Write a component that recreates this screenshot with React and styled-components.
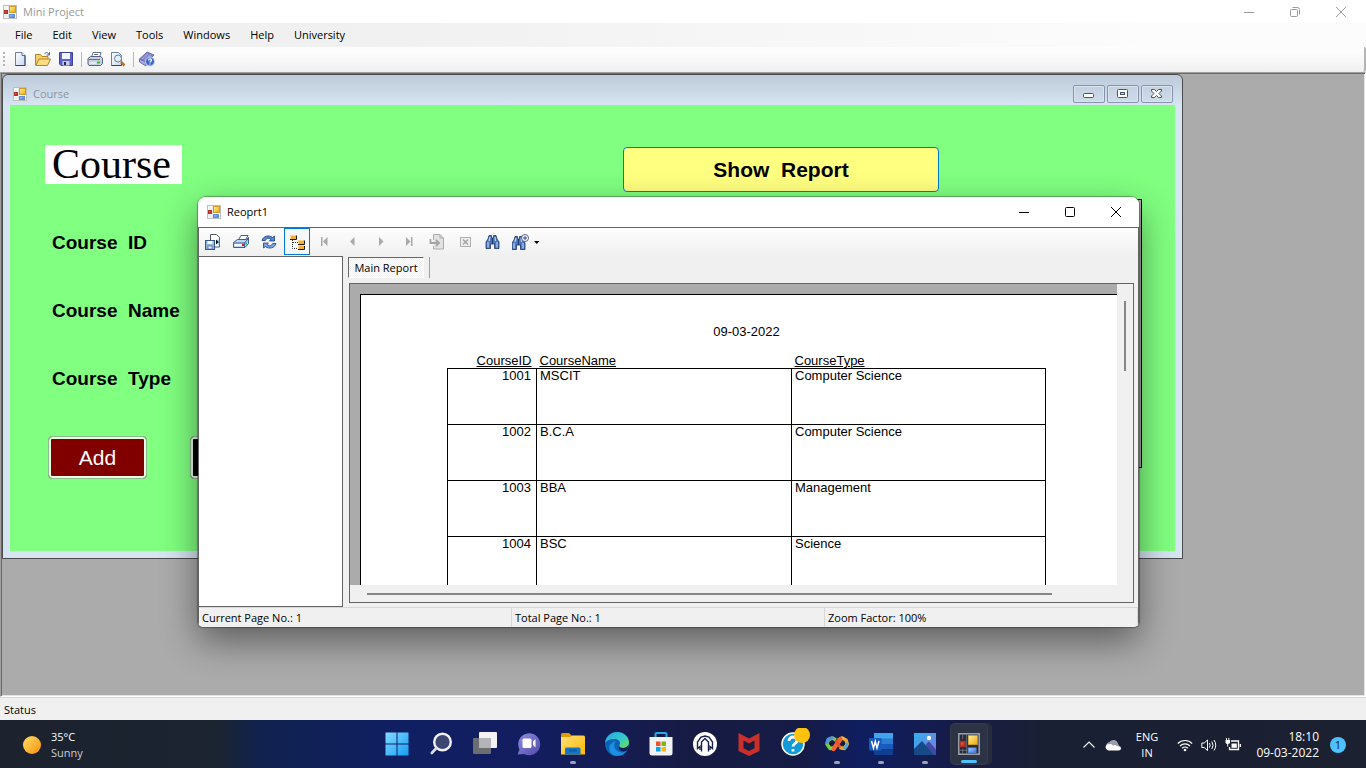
import React from "react";
import styled, { createGlobalStyle, css } from "styled-components";

const uiFont = '"Open Sans", "Noto Sans", sans-serif';
const reportFont = '"Liberation Sans", Arial, sans-serif';

const GlobalStyle = createGlobalStyle`
  * { box-sizing: border-box; }
  body { margin: 0; font-family: ${uiFont}; font-size: 11px; color: #000; }
  button, input { font: inherit; color: inherit; }
`;

const Desktop = styled.div`
  display: flex;
  flex-direction: column;
  min-height: 100vh;
  overflow: hidden;
`;

const MainWindow = styled.main`
  display: flex;
  flex-direction: column;
  flex: 1;
  overflow: hidden;
  background: #f0f0f0;
`;

const TitleBar = styled.header`
  display: flex;
  align-items: center;
  height: ${(p) => (p.$child ? "30px" : "23px")};
  padding: ${(p) => (p.$child ? "0 0 1px 9px" : "0 2px 0 3px")};
  background: #fff;
  color: ${(p) => (p.$inactive ? "#999" : "#000")};
`;

const TitleText = styled.h1`
  flex: 1;
  margin: 0 0 0 6px;
  font-size: 11px;
  font-weight: 400;
  line-height: 16px;
`;

const CaptionButton = styled.button`
  display: flex;
  align-items: center;
  justify-content: center;
  width: 46px;
  height: 22px;
  padding: 0;
  border: 0;
  background: none;
`;

const MenuBar = styled.nav`
  display: flex;
  align-items: center;
  gap: 20px;
  height: 24px;
  padding-left: 15px;
  background: linear-gradient(90deg, #f0f0f0 25%, #fcfcfc 85%);
`;

const MenuItem = styled.button`
  padding: 0;
  border: 0;
  background: none;
  line-height: 16px;
`;

const ToolBar = styled.div`
  display: flex;
  align-items: center;
  gap: 7px;
  height: 25px;
  padding: 0 0 1px 3px;
  border-right: 2px solid #b4b4b4;
  border-radius: 0 2px 3px 0;
  background: linear-gradient(#fdfdfd 20%, #f0f0f0);
`;

const Grip = styled.span`
  width: 2px;
  height: 14px;
  background: repeating-linear-gradient(#b4b4b4 0 2px, transparent 2px 4px);
`;

const Separator = styled.span`
  width: 1px;
  height: 15px;
  margin-right: -2px;
  background: #b8b8b8;
`;

const ToolButton = styled.button`
  display: flex;
  padding: 0;
  border: 0;
  background: none;
`;

const MdiArea = styled.div`
  position: relative;
  flex: 1;
  border: 1px solid;
  border-color: #a0a0a0 #fff #fff #a0a0a0;
  box-shadow: inset 1px 1px 0 #696969, inset -1px -1px 0 #e3e3e3;
  background: #ababab;
`;

const StatusStrip = styled.footer`
  height: 23px;
  padding: 4px;
  border-top: 1px solid #d7d7d7;
  line-height: 16px;
`;

/* ---------- Course window ---------- */

const CourseWindow = styled.section`
  position: absolute;
  left: 1px;
  top: 1px;
  width: 1181px;
  height: 485px;
  display: flex;
  flex-direction: column;
  padding: 0 7px 7px;
  border: 1px solid #4b4b4b;
  border-radius: 6px 6px 0 0;
  background: linear-gradient(#bccad9, #d7e4f2 30px);
`;

const CourseTitleBar = styled.header`
  display: flex;
  align-items: center;
  height: 30px;
  padding: 7px 2px 0 3px;
  color: #8c949e;
`;

const FrameButton = styled.button`
  display: flex;
  align-items: center;
  justify-content: center;
  width: 32px;
  height: 18px;
  margin-left: 2px;
  padding: 0;
  border: 1px solid #8793ad;
  border-radius: 2px;
  background: linear-gradient(#c3d0e0, #cfdcea);
  box-shadow: inset 0 0 0 1px #dbe5f0;
`;

const CourseBody = styled.div`
  display: flex;
  flex: 1;
  padding: 40px 33px 0 35px;
  background: #80ff80;
  font-family: ${reportFont};
`;

const FormColumn = styled.div`
  width: 578px;
`;

const GridColumn = styled.div`
  display: flex;
  flex: 1;
  flex-direction: column;
  align-items: flex-start;
  gap: 7px;
  padding-top: 2px;
`;

const CourseHeading = styled.h2`
  width: 137px;
  height: 39px;
  margin: 0 0 47px;
  padding-left: 7px;
  background: #fff;
  font: 400 42px/38px "Liberation Serif", "Times New Roman", serif;
`;

const Fields = styled.div`
  display: grid;
  grid-template-columns: 200px 220px;
  row-gap: 44px;
  padding-left: 7px;
`;

const FieldLabel = styled.label`
  font-size: 19px;
  font-weight: 700;
  line-height: 24px;
  white-space: pre;
`;

const FieldInput = styled.input`
  height: 24px;
  border: 1px solid #7a7a7a;
`;

const ButtonRow = styled.div`
  display: flex;
  gap: 43px;
  margin: 45px 0 0 3px;
`;

const FormButton = styled.button`
  width: 99px;
  height: 43px;
  padding: 0;
  border: 1px solid #8fb98f;
  border-radius: 4px;
  background: ${(p) => (p.$dark ? "#000" : "#800000")};
  box-shadow: inset 0 0 0 2px #e4fbe4;
  color: #fff;
  font-size: 21px;
`;

const ShowReportButton = styled.button`
  width: 316px;
  height: 45px;
  padding: 0;
  border: 1px solid #0078d7;
  border-radius: 4px;
  background: #ffff80;
  font-size: 21px;
  font-weight: 700;
  white-space: pre;
`;

const DataGrid = styled.div`
  align-self: stretch;
  height: 269px;
  border: 1px solid #000;
  background: #ababab;
`;

/* ---------- Report window ---------- */

const ReportWindow = styled.section`
  position: absolute;
  left: 197px;
  top: 124px;
  width: 941px;
  height: 430px;
  display: flex;
  flex-direction: column;
  overflow: hidden;
  border-radius: 8px 8px 5px 5px;
  background: #f0f0f0;
`;

const ReportShadow = styled.div`
  position: absolute;
  left: 197px;
  top: 124px;
  width: 941px;
  height: 430px;
  border-radius: 8px 8px 5px 5px;
  box-shadow: 0 0 1px 1px rgba(0, 0, 0, 0.3), 0 14px 36px rgba(0, 0, 0, 0.46);
`;

const ReportClient = styled.div`
  display: flex;
  flex-direction: column;
  flex: 1;
  min-height: 0;
  border: solid #646464;
  border-width: 1px 1px 0;
`;

const ReportTools = styled.div`
  display: flex;
  height: 28px;
  background: linear-gradient(#fdfdfd, #f0f0f0);
`;

const ReportTool = styled.button`
  display: flex;
  align-items: center;
  justify-content: center;
  width: ${(p) => (p.$wide ? "38px" : "28px")};
  height: 27px;
  padding: 0;
  border: 0;
  background: none;
  ${(p) =>
    p.$active &&
    css`
      width: 26px;
      margin: 0 1px;
      border: 1px solid #0078d7;
      background: #f6f9fc;
    `}
`;

const ReportBody = styled.div`
  display: flex;
  flex: 1;
  min-height: 0;
`;

const GroupTree = styled.aside`
  width: 144px;
  border: solid #646464;
  border-width: 1px 1px 1px 0;
  background: #fff;
`;

const ViewerColumn = styled.div`
  display: flex;
  flex: 1;
  min-width: 0;
  flex-direction: column;
  gap: 5px;
  padding: 1px 4px 4px 5px;
`;

const TabStrip = styled.div`
  display: flex;
  gap: 5px;
  height: 21px;
`;

const Tab = styled.button`
  width: 76px;
  padding: 0;
  border: 1px solid;
  border-color: #696969 #fff #fff #696969;
  background: repeating-conic-gradient(#f0f0f0 0 25%, #fff 0 50%) 0 0 / 2px 2px;
  line-height: 18px;
  white-space: nowrap;
`;

const TabDivider = styled.span`
  width: 1px;
  background: #a0a0a0;
`;

const Viewer = styled.div`
  display: grid;
  flex: 1;
  min-height: 0;
  grid-template: minmax(0, 1fr) 17px / minmax(0, 1fr) 16px;
  margin-left: 1px;
  border: 1px solid #646464;
`;

const Canvas = styled.div`
  overflow: hidden;
  padding: 10px 0 0 10px;
  background: #ababab;
`;

const Paper = styled.article`
  min-height: 100%;
  padding: 29px 0 0 86px;
  border: solid #000;
  border-width: 1px 0 0 1px;
  background: #fff;
  font-family: ${reportFont};
  font-size: 13px;
`;

const ReportDate = styled.p`
  width: 599px;
  margin: 0 0 13px;
  line-height: 16px;
  text-align: center;
`;

const CourseTable = styled.table`
  width: 599px;
  table-layout: fixed;
  border-collapse: collapse;

  th {
    height: 15px;
    padding: 0 3px;
    font-weight: 400;
    line-height: 15px;
    text-align: left;
    text-decoration: underline;
  }

  td {
    height: 56px;
    padding: 0 3px;
    border: 1px solid #000;
    line-height: 14px;
    vertical-align: top;
  }

  th:first-child,
  td:first-child {
    padding-right: 5px;
    text-align: right;
  }
`;

const ScrollTrack = styled.div`
  display: flex;
  padding: ${(p) => (p.$vertical ? "17px 7px" : "8px 17px 7px")};
  grid-column: ${(p) => (p.$vertical ? "2" : "1 / 3")};
`;

const ScrollThumb = styled.span`
  width: ${(p) => (p.$vertical ? "2px" : "685px")};
  height: ${(p) => (p.$vertical ? "70px" : "2px")};
  background: #868686;
`;

const ReportStatus = styled.footer`
  display: grid;
  grid-template-columns: repeat(3, 1fr);
  height: 20px;
  border-top: 1px solid #d7d7d7;
  line-height: 19px;
`;

const StatusCell = styled.span`
  padding-left: 3px;
  border-right: 1px solid #d7d7d7;
`;

/* ---------- Taskbar ---------- */

const TaskBar = styled.footer`
  display: grid;
  grid-template-columns: 1fr auto 1fr;
  align-items: center;
  height: 48px;
  background: linear-gradient(
    90deg,
    #1c222e 0%,
    #1b2431 16%,
    #10224f 19%,
    #101f63 29%,
    #121d5e 40%,
    #171b43 51%,
    #161b46 59%,
    #0f1e60 63%,
    #161c48 70%,
    #1a2034 76%,
    #1b2130 100%
  );
  color: #fff;
  font-size: 12px;
`;

const Weather = styled.button`
  display: flex;
  align-items: center;
  gap: 10px;
  padding: 2px 0 0 23px;
  border: 0;
  background: none;
  font-size: 11px;
  line-height: 16px;
  text-align: left;
`;

const Muted = styled.span`
  color: #c8ccd2;
`;

const Lines = styled.span`
  display: flex;
  flex-direction: column;
`;

const Apps = styled.div`
  display: flex;
`;

const AppButton = styled.button`
  display: flex;
  flex-direction: column;
  align-items: center;
  width: 44px;
  height: 40px;
  padding: 8px 0 0;
  border: 0;
  background: none;
  ${(p) =>
    p.$active &&
    css`
      width: 36px;
      margin: 0 4px;
      padding-top: 9px;
      border-radius: 4px;
      background: #2c3345;
      box-shadow: 0 0 0 1px #363c4b, 4px 0 0 1px #272d3d;
    `}
`;

const RunMark = styled.span`
  flex: none;
  width: ${(p) => (p.$active ? "16px" : "6px")};
  height: 3px;
  margin-top: 5px;
  border-radius: 2px;
  background: ${(p) => (p.$active ? "#4cc2ff" : "#9aa1b2")};
`;

const Tray = styled.div`
  display: flex;
  align-items: center;
  justify-content: flex-end;
  gap: 8px;
  padding: 1px 20px 0 0;
  line-height: 16px;
`;

const Language = styled.span`
  width: 36px;
  margin-right: 4px;
  font-size: 11px;
  text-align: center;
`;

const Clock = styled.time`
  width: 70px;
  text-align: right;
`;

const Badge = styled.span`
  width: 16px;
  height: 16px;
  margin-left: 3px;
  border-radius: 50%;
  background: #4cc2ff;
  color: #10222e;
  font-size: 11px;
  line-height: 16px;
  text-align: center;
`;

/* ---------- Icons ---------- */

const Icon = ({ size = 16, box, children }) => (
  <svg width={size} height={size} viewBox={`0 0 ${box || size} ${box || size}`} fill="none" aria-hidden="true">
    {children}
  </svg>
);

const GradientDefs = styled.svg`
  position: absolute;
`;

const Gradients = () => (
  <GradientDefs width="0" height="0" aria-hidden="true">
    <defs>
      <linearGradient id="gYellow" x2="1" y2="1"><stop stopColor="#fff0a0" /><stop offset="1" stopColor="#eba800" /></linearGradient>
      <linearGradient id="gRed" x2="1" y2="1"><stop stopColor="#f08070" /><stop offset="1" stopColor="#b01008" /></linearGradient>
      <linearGradient id="gBlue" x2="1" y2="1"><stop stopColor="#b4d4ff" /><stop offset="1" stopColor="#3070e0" /></linearGradient>
      <linearGradient id="gPage" x2="1" y2="1"><stop stopColor="#fff" /><stop offset="1" stopColor="#c8d8ee" /></linearGradient>
      <linearGradient id="gWin" x2="1" y2="1"><stop stopColor="#84dcff" /><stop offset="1" stopColor="#149cf5" /></linearGradient>
      <linearGradient id="gChat" x2="1" y2="1"><stop stopColor="#8d8fe8" /><stop offset="1" stopColor="#5347a8" /></linearGradient>
      <linearGradient id="gFolder" x2="1" y2="1"><stop stopColor="#ffdf7c" /><stop offset="1" stopColor="#ffb900" /></linearGradient>
      <linearGradient id="gEdge" x2="1" y2="1"><stop stopColor="#22a7e8" /><stop offset=".55" stopColor="#35c9c9" /><stop offset="1" stopColor="#6ee04a" /></linearGradient>
      <linearGradient id="gPhoto" x2="1" y2="1"><stop stopColor="#2bb4ee" /><stop offset="1" stopColor="#8a70e0" /></linearGradient>
      <linearGradient id="gSun" x2="1" y2="1"><stop stopColor="#ffe066" /><stop offset="1" stopColor="#f78f0a" /></linearGradient>
    </defs>
  </GradientDefs>
);

const FormsIcon = ({ size = 14, dark }) => (
  <Icon size={size} box={14}>
    <rect x=".5" y=".5" width="13" height="13" fill={dark ? "#262b3c" : "#fff"} stroke={dark ? "#9a9ca4" : "#bdbdbd"} />
    <path d="M3 1v3M3 10v3M1 11h5M5.500 1v12" stroke={dark ? "#6a6e7c" : "#d4d4d4"} strokeWidth=".6" />
    <rect x="6.500" y="1.500" width="6" height="6" fill="url(#gYellow)" stroke="#d09a20" strokeWidth={dark ? ".3" : "1"} />
    <rect x="1.500" y="5.500" width="3" height="3" fill="url(#gRed)" stroke="#b03024" strokeWidth="1" />
    <rect x="6.500" y="9.500" width="5" height="3" fill="url(#gBlue)" stroke="#5b8ce0" strokeWidth={dark ? ".5" : "1"} />
  </Icon>
);

const Minimize = () => <Icon size={12}><path d="M1 6.5h10" stroke="currentColor" /></Icon>;
const Maximize = () => <Icon size={12}><rect x="1.5" y="1.5" width="9" height="9" rx="1" stroke="currentColor" /></Icon>;
const Restore = () => (
  <Icon size={12}>
    <rect x="1.5" y="3.5" width="7" height="7" rx="1" stroke="currentColor" />
    <path d="M3.5 1.5h5a2 2 0 0 1 2 2v5" stroke="currentColor" />
  </Icon>
);
const Close = () => <Icon size={12}><path d="M1 1l10 10M11 1L1 11" stroke="currentColor" /></Icon>;

const FrameMin = () => <Icon size={12}><rect x=".5" y="5.500" width="10" height="4" rx="1" fill="#fff" stroke="#4b5367" /></Icon>;
const FrameRestore = () => (
  <Icon size={12}>
    <rect x=".5" y="1.500" width="10" height="8" rx="1" fill="#fff" stroke="#4b5367" />
    <rect x="3.500" y="4.500" width="4" height="2" fill="#cbd7e6" stroke="#4b5367" />
  </Icon>
);
const FrameClose = () => (
  <Icon size={12}>
    <path d="M.5 1.500h3L5.500 3.500l2-2h3v1.500L8 5.500l2.500 2.500v1.500h-3l-2-2-2 2h-3V8L3 5.500.5 3z" fill="#fff" stroke="#4b5367" />
  </Icon>
);

const NewIcon = () => (
  <Icon><path d="M3.500 1.500h6.500l3 3v10h-9.500z" fill="url(#gPage)" stroke="#6c7fa8" /><path d="M10 1.500v3h3" fill="#fff" stroke="#5a6f9c" /><path d="M13 4.500v10h-9.500" stroke="#2f4474" /></Icon>
);
const OpenIcon = () => (
  <Icon>
    <path d="M.500 14V3.500h5l1.500 2h6V8" fill="#f3cf6a" stroke="#b5822a" />
    <path d="M.8 14.500L4 8h11.500l-3 6.500z" fill="#fbdc84" stroke="#b5822a" />
    <path d="M9.500 3c1-2 3.500-2 4.500.5M14.500 1v3h-3" stroke="#44628c" />
  </Icon>
);
const SaveIcon = () => (
  <Icon>
    <path d="M1.500 1.500h13v13H3l-1.500-1.500z" fill="#5a62cc" stroke="#3d449c" />
    <rect x="4" y="2" width="8" height="6" fill="#f4f5fb" /><rect x="4.500" y="10" width="7" height="4.500" fill="#c7cbe2" />
    <rect x="6" y="11" width="2" height="3" fill="#23285e" />
  </Icon>
);
const PrinterIcon = () => (
  <Icon>
    <path d="M4.500 6.500L6 1.500h8L12.500 6.500z" fill="#fff" stroke="#66728c" />
    <path d="M1 7.500l2.500-2H14l1.500 2v5L13.500 14.500H2L1 13z" fill="#c9d2e2" stroke="#55627d" />
    <path d="M1.500 8.500h11.500M7 3.500h4" stroke="#66728c" /><path d="M2.500 12h7" stroke="#fff" />
    <rect x="10" y="10.500" width="3" height="2" fill="#20d020" />
  </Icon>
);
const PreviewIcon = () => (
  <Icon>
    <path d="M1.500 1.500h7l3 3v10h-10z" fill="url(#gPage)" stroke="#6c7fa8" /><path d="M1.500 14.500h10v-3" stroke="#2f4474" />
    <circle cx="8" cy="7.500" r="3.500" fill="#dff0fa" stroke="#6c7f96" /><path d="M11 11l3.500 3.500" stroke="#b5702a" strokeWidth="2.500" />
  </Icon>
);
const HelpIcon = () => (
  <Icon>
    <path d="M.500 8L8 1l7 3L8 11z" fill="#8486cc" stroke="#6c6eb4" /><path d="M.500 8v3l6.500 4V11z" fill="#a8aae0" stroke="#6c6eb4" />
    <path d="M3 8l6-5M5.500 9l6-5" stroke="#a9abe0" />
    <circle cx="11" cy="10.500" r="4.500" fill="#3d68c8" stroke="#c9d8f5" />
    <path d="M9.500 9.500c0-2 3-2 3-.3 0 1-1.500 1-1.500 2.300M11 12.500v1" stroke="#fff" strokeWidth="1.200" />
  </Icon>
);

const ExportIcon = () => (
  <Icon>
    <path d="M5.500 10V.500h6l3 3V13H9" fill="#fff" stroke="#4c5568" /><path d="M11 5.500v5l3-2.500z" fill="#111" /><rect x="13" y="5" width="2" height="6" fill="#4ea8e0" opacity=".5" />
    <rect x=".5" y="6.500" width="9" height="9" fill="#8fb4dc" stroke="#345a8c" /><rect x="2.500" y="7" width="5" height="3" fill="#fff" /><rect x="3" y="12" width="4" height="3" fill="#e5edf8" stroke="#345a8c" strokeWidth=".6" />
  </Icon>
);
const PrintReportIcon = () => (
  <Icon>
    <path d="M5 6.500L8 1.500h7L12 6.500z" fill="#fff" stroke="#3b5f9c" />
    <path d="M.500 8.500l4-3h9l2-2v6L12 13.500H.500z" fill="#bcd5f0" stroke="#3b5f9c" /><path d="M1 9h10.500l3.500-4M11.500 9v4" stroke="#3b5f9c" />
    <path d="M1.500 11h8" stroke="#fff" strokeWidth="2" />
    <rect x="9" y="10" width="2" height="2" fill="#d22" /><rect x="12.500" y="8.500" width="1.500" height="2" fill="#2b4" />
  </Icon>
);
const RefreshIcon = () => (
  <Icon>
    <path d="M1 6.500C2 2 8 .5 11.500 3.500L13.500 2v5H8.500l1.500-1.700C7.500 3.500 5 4.500 4.300 6.500z" fill="#4d8bd8" stroke="#1e3e80" strokeWidth=".8" />
    <path d="M15 9.500C14 14 8 15.500 4.500 12.500L2.500 14V9h5L6 10.700c2.500 1.800 5 .8 5.700-1.200z" fill="#74a9e4" stroke="#1e3e80" strokeWidth=".8" />
  </Icon>
);
const TreeIcon = () => (
  <Icon>
    <path d="M3.500 6v8.500H9M4 8.500h5" stroke="#333" strokeDasharray="1 1" />
    <path d="M1 1h6v4H1zM9 6h6v4H9zM9 11.500h6v4H9z" fill="#f2b03a" /><path d="M1 5.500h6.500V1.500M9 10.500h6.500V6.500M9 15.500h6.500V12" stroke="#1c1c1c" /><path d="M1.500 5V1.500h5M9.500 10V6.500h5M9.500 15v-3.500h5" stroke="#ffd98c" />
  </Icon>
);
const FirstIcon = () => <Icon><path d="M5.500 3H4v9h1.500zM10.500 3v9L6 7.500z" fill="#a9a9a9" /></Icon>;
const PrevIcon = () => <Icon><path d="M9.500 3v9L5 7.500z" fill="#a9a9a9" /></Icon>;
const NextIcon = () => <Icon><path d="M6 3v9l4.500-4.500z" fill="#a9a9a9" /></Icon>;
const LastIcon = () => <Icon><path d="M5 3v9l4.500-4.500zM10 3h1.500v9H10z" fill="#a9a9a9" /></Icon>;
const GotoIcon = () => (
  <Icon><path d="M4.500 6V.500H11L14.500 4v11h-10v-3" fill="#e2e2e2" stroke="#ababab" /><path d="M11 .500V4h3.500" stroke="#ababab" /><path d="M1.500 5v4H9M7 6l3 3-3 3" stroke="#a4a4a4" strokeWidth="1.800" /></Icon>
);
const CloseViewIcon = () => <Icon><rect x="3.500" y="3.500" width="10" height="9" fill="#eee" stroke="#b0b0b0" /><path d="M6 5.500l5 5M11 5.500l-5 5" stroke="#a4a4a4" strokeWidth="1.500" /></Icon>;
const binocularPath = (
  <>
    <path d="M4 1.500h2.500V4h2V1.500H11l1 3.500 2 3v6.500h-4.500V10h-4v4.500H1V8l2-3z" fill="#4b76bd" stroke="#1d3468" strokeWidth=".8" />
    <path d="M3 8v5.500M12 8v5.500M5 3L4 7M10 3l.5 4" stroke="#bcd4f4" strokeWidth="1.200" /><path d="M7.500 4v6" stroke="#1d3468" />
  </>
);
const FindIcon = () => <Icon>{binocularPath}</Icon>;
const ZoomIcon = () => (
  <svg width="28" height="16" viewBox="0 0 28 16" fill="none" aria-hidden="true">
    <g transform="translate(-1 1)">{binocularPath}</g>
    <circle cx="13" cy="4" r="3.500" fill="#fff" stroke="#4f5f91" /><path d="M11 4h4M13 2v4" stroke="#303f96" />
    <path d="M22 7h5.500l-2.750 3z" fill="#000" />
  </svg>
);

const StartIcon = () => <Icon size={24}><path d="M.5.500h11v11H.5zM12.500.500h11v11h-11zM.5 12.500h11v11H.5zM12.500 12.500h11v11h-11z" fill="url(#gWin)" /></Icon>;
const SearchIcon = () => <Icon size={24}><circle cx="13.500" cy="10" r="8.300" fill="#3c4672" stroke="#f1f1f5" strokeWidth="2.400" /><path d="M7.500 16L2.800 21" stroke="#dcdde2" strokeWidth="2.600" strokeLinecap="round" /></Icon>;
const TaskViewIcon = () => <Icon size={24}><rect x="0" y="6" width="18" height="16" rx="1" fill="#6c6d70" /><rect x="6" y="0" width="18" height="16" rx="1" fill="#f2f2f2" /><rect x="6" y="6" width="12" height="10" fill="#b4b5b8" /></Icon>;
const ChatIcon = () => (
  <Icon size={24}><path d="M.5 22.500l2-5A11 11 0 1 1 7 22z" fill="url(#gChat)" /><rect x="5.500" y="6.500" width="9" height="9.500" rx="1.500" fill="#fff" /><path d="M16 9.500L18.500 7v8.500L16 13z" fill="#fff" /></Icon>
);
const FolderIcon = () => (
  <Icon size={24}><path d="M0 6V2.500Q0 1 1.500 1H8l2.500 2.500V6z" fill="#e09c05" /><path d="M0 5h9l2-1.500h11.500Q24 3.500 24 5v17.500H0z" fill="url(#gFolder)" /><path d="M4 22.500V17q0-1.500 1.500-1.500h12.500q1.500 0 1.500 1.500v5.500z" fill="#1374c8" /><path d="M8 18.500h8" stroke="#0a5da8" strokeWidth="2" /></Icon>
);
const EdgeIcon = () => (
  <Icon size={24}>
    <circle cx="12" cy="12" r="12" fill="#0c62b4" />
    <path d="M0 11C1 4 6 0 12 0c7 0 12 5 12 10 0 4-3 6-6 6-2.500 0-4-1-4-2 0-.8 1-1 1-3 0-2-2-4-6-4-4 0-8 2-9 4z" fill="url(#gEdge)" />
    <path d="M8 23C2 19 3 11 11 9c-3 3-2 9 3 11 3 1 6 .5 8-1.500-3 5-9 6.500-14 4.500z" fill="#1b8fe0" />
    <path d="M14 13.500c.3 1.700 2 2.500 4 2.500 2.500 0 4-1 5.300-3 .5 2-.3 5-2.500 6-4 1.500-8-1-6.800-5.500z" fill="#131e5c" />
  </Icon>
);
const StoreIcon = () => (
  <Icon size={24}>
    <path d="M6.500 6V2q0-1 1-1h9q1 0 1 1v4" stroke="#2aa8e8" strokeWidth="2" /><path d="M.5 5h23v16q0 2.500-2.500 2.500H3Q.5 23.500.5 21z" fill="#f1f2f4" />
    <path d="M7 9.500h4.500V14H7z" fill="#f0512a" /><path d="M12.500 9.500H17V14h-4.500z" fill="#7fb80c" /><path d="M7 15h4.500v4.500H7z" fill="#0aa3ea" /><path d="M12.500 15H17v4.500h-4.500z" fill="#fdb80b" />
  </Icon>
);
const PredatorIcon = () => (
  <Icon size={24}><circle cx="12" cy="12" r="12" fill="#fff" /><path d="M7 18v-3.500l-2.500 2V10L8 5l4-1 4 1 3.500 5v6.500l-2.500-2V18" stroke="#1a2148" strokeWidth="1.400" /><path d="M8.500 19.500V10L12 6.500l3.500 3.500v9.500" stroke="#1a2148" strokeWidth="1.400" /></Icon>
);
const McAfeeIcon = () => <Icon size={24}><path d="M1.500 1L12 6.500 22.500 1v18L12 24 1.500 19z" fill="#c92f2b" /><path d="M6.500 8.500L12 11.500l5.500-3v7.700L12 19l-5.500-2.800z" fill="#1a1d42" /></Icon>;
const HelpAppGlyph = styled.svg`
  flex: none;
  margin: -4px 0 0 4px;
`;
const HelpAppIcon = () => (
  <HelpAppGlyph width="30" height="28" viewBox="0 0 30 28" fill="none" aria-hidden="true">
    <circle cx="13" cy="16" r="11" fill="#109bd8" stroke="#fff" strokeWidth="1.500" /><path d="M9 13c0-5.500 8-5 8-.5 0 3-4 3-4 6M13 21v2.500" stroke="#fff" strokeWidth="2.800" />
    <circle cx="22" cy="7" r="8" fill="#ffc20e" />
  </HelpAppGlyph>
);
const LoopIcon = () => (
  <Icon size={24}>
    <path d="M11 8L7.500 6 3.500 7.500 2 12l3 4.500 5-1" stroke="#7cc64c" strokeWidth="3.600" strokeLinejoin="round" /><path d="M13 8l4-2 4 2 1.300 4-3 4.500-4.800-1" stroke="#f1a52f" strokeWidth="3.600" strokeLinejoin="round" />
    <path d="M1.500 12l1.500-4.500L8 5.500" stroke="#5590dd" strokeWidth="3" /><path d="M18 16.500l3-1.500 1.500-4" stroke="#4ba8d8" strokeWidth="3" /><path d="M6 16.500l3 .5M16 6l3 .5" stroke="#f3c63a" strokeWidth="3" /><path d="M8.500 17L15.500 7" stroke="#f26432" strokeWidth="4.500" strokeLinecap="round" /><path d="M10.500 8.500l5 7" stroke="#e8532c" strokeWidth="3" /><circle cx="6" cy="11.500" r="1.800" fill="#18182b" /><circle cx="18" cy="11.500" r="1.800" fill="#18182b" />
  </Icon>
);
const WordIcon = () => (
  <Icon size={24}>
    <path d="M5 1h19v6H5z" fill="#41a5ee" /><path d="M5 6.500h19V12H5z" fill="#2b7cd3" /><path d="M5 12h19v5.500H5z" fill="#185abd" /><path d="M5 17.500h19V23H5z" fill="#103f91" />
    <rect x="0" y="6" width="12.500" height="12.500" rx="1" fill="#185abd" /><path d="M2.500 9l2 7 1.800-6.500L8 16l2-7" stroke="#fff" strokeWidth="1.500" />
  </Icon>
);
const PhotoIcon = () => (
  <Icon size={24}><path d="M1 1h22v22H1z" fill="url(#gPhoto)" /><path d="M13 12l3-2.500 7 8V23h-8z" fill="#3f4aa6" /><path d="M1 17l8-8 12 14H1z" fill="#154a86" /><circle cx="16" cy="6" r="2.200" fill="#fff" /></Icon>
);

const SunIcon = () => <Icon size={18}><circle cx="9" cy="9" r="9" fill="url(#gSun)" /></Icon>;
const ChevronIcon = () => <Icon><path d="M2.500 10.500L8 5l5.500 5.500" stroke="#f0f0f0" strokeWidth="1.200" /></Icon>;
const CloudIcon = () => (
  <Icon><path d="M1.500 9.500a3.500 3.500 0 0 1 3-4.500 4.800 4.800 0 0 1 8.500 1.500l1.500 3z" fill="#9b9ea4" /><path d="M3.200 13.500a3.200 3.200 0 0 1 0-6.300Q6 6.500 8 8.500 10 7.500 12 9q4 0 4 2.300 0 2.200-2.500 2.200z" fill="#fff" /></Icon>
);
const WifiIcon = () => (
  <Icon><path d="M.8 6.500a10.200 10.200 0 0 1 14.400 0M3 9a7 7 0 0 1 10 0M5.200 11.300a4 4 0 0 1 5.600 0" stroke="#fff" strokeWidth="1.200" /><circle cx="8" cy="13" r="1.300" fill="#fff" /></Icon>
);
const SpeakerIcon = () => (
  <Icon><path d="M.8 6h2.400l3.300-3v10.500L3.200 10.500H.8z" stroke="#fff" /><path d="M8.500 6q1.300 2.200 0 4.500M10.800 4.500q2.500 3.800 0 7.500M13 3q3.500 5.200 0 10.500" stroke="#fff" /></Icon>
);
const BatteryIcon = () => (
  <Icon><path d="M6 4h7.500v8.500H4.500V10M15.300 7v3" stroke="#fff" strokeWidth="1.300" /><path d="M6.500 6.500h5.300v4.300H6.500z" fill="#fff" /><path d="M1.500 1v2M3.800 1v2" stroke="#fff" /><path d="M.5 3h4.500v2.500Q4.500 7 2.700 7T.5 5.500z" fill="#fff" /><path d="M2.700 7v2.500" stroke="#fff" /></Icon>
);

/* ---------- Data ---------- */

const menus = ["File", "Edit", "View", "Tools", "Windows", "Help", "University"];

const reportTools = [
  ["Export report", ExportIcon],
  ["Print report", PrintReportIcon],
  ["Refresh", RefreshIcon],
  ["Toggle group tree", TreeIcon],
  ["First page", FirstIcon],
  ["Previous page", PrevIcon],
  ["Next page", NextIcon],
  ["Last page", LastIcon],
  ["Go to page", GotoIcon],
  ["Close current view", CloseViewIcon],
  ["Find text", FindIcon],
  ["Zoom", ZoomIcon],
];

const courses = [
  [1001, "MSCIT", "Computer Science"],
  [1002, "B.C.A", "Computer Science"],
  [1003, "BBA", "Management"],
  [1004, "BSC", "Science"],
];

const apps = [
  ["Start", StartIcon],
  ["Search", SearchIcon],
  ["Task view", TaskViewIcon],
  ["Chat", ChatIcon],
  ["File Explorer", FolderIcon, true],
  ["Edge", EdgeIcon],
  ["Store", StoreIcon],
  ["Predator", PredatorIcon],
  ["McAfee", McAfeeIcon],
  ["Help", HelpAppIcon],
  ["Visual Studio", LoopIcon, true],
  ["Word", WordIcon, true],
  ["Photos", PhotoIcon, true],
];

function CourseForm() {
  return (
    <CourseWindow>
      <CourseTitleBar>
        <FormsIcon />
        <TitleText as="h2">Course</TitleText>
        <FrameButton aria-label="Minimize"><FrameMin /></FrameButton>
        <FrameButton aria-label="Restore"><FrameRestore /></FrameButton>
        <FrameButton aria-label="Close"><FrameClose /></FrameButton>
      </CourseTitleBar>
      <CourseBody>
        <FormColumn>
          <CourseHeading>Course</CourseHeading>
          <Fields>
            <FieldLabel htmlFor="course-id">{"Course  ID"}</FieldLabel>
            <FieldInput id="course-id" />
            <FieldLabel htmlFor="course-name">{"Course  Name"}</FieldLabel>
            <FieldInput id="course-name" />
            <FieldLabel htmlFor="course-type">{"Course  Type"}</FieldLabel>
            <FieldInput id="course-type" />
          </Fields>
          <ButtonRow>
            <FormButton>Add</FormButton>
            <FormButton $dark aria-label="Update" />
          </ButtonRow>
        </FormColumn>
        <GridColumn>
          <ShowReportButton>{"Show  Report"}</ShowReportButton>
          <DataGrid />
        </GridColumn>
      </CourseBody>
    </CourseWindow>
  );
}

function Report() {
  return (
    <ReportWindow>
      <TitleBar $child>
        <FormsIcon />
        <TitleText as="h2">Reoprt1</TitleText>
        <CaptionButton aria-label="Minimize"><Minimize /></CaptionButton>
        <CaptionButton aria-label="Maximize"><Maximize /></CaptionButton>
        <CaptionButton aria-label="Close"><Close /></CaptionButton>
      </TitleBar>
      <ReportClient>
        <ReportTools>
          {reportTools.map(([label, Glyph]) => (
            <ReportTool key={label} aria-label={label} $active={Glyph === TreeIcon} $wide={Glyph === ZoomIcon}>
              <Glyph />
            </ReportTool>
          ))}
        </ReportTools>
        <ReportBody>
          <GroupTree />
          <ViewerColumn>
            <TabStrip>
              <Tab>Main Report</Tab>
              <TabDivider />
            </TabStrip>
            <Viewer>
              <Canvas>
                <Paper>
                  <ReportDate>09-03-2022</ReportDate>
                  <CourseTable>
                    <colgroup>
                      <col width="89" />
                      <col width="255" />
                      <col width="254" />
                    </colgroup>
                    <thead>
                      <tr><th>CourseID</th><th>CourseName</th><th>CourseType</th></tr>
                    </thead>
                    <tbody>
                      {courses.map(([id, name, type]) => (
                        <tr key={id}><td>{id}</td><td>{name}</td><td>{type}</td></tr>
                      ))}
                    </tbody>
                  </CourseTable>
                </Paper>
              </Canvas>
              <ScrollTrack $vertical><ScrollThumb $vertical /></ScrollTrack>
              <ScrollTrack><ScrollThumb /></ScrollTrack>
            </Viewer>
          </ViewerColumn>
        </ReportBody>
        <ReportStatus>
          <StatusCell>Current Page No.: 1</StatusCell>
          <StatusCell>Total Page No.: 1</StatusCell>
          <StatusCell>Zoom Factor: 100%</StatusCell>
        </ReportStatus>
      </ReportClient>
    </ReportWindow>
  );
}

export default function App() {
  return (
    <Desktop>
      <GlobalStyle />
      <Gradients />
      <MainWindow>
        <TitleBar $inactive>
          <FormsIcon />
          <TitleText>Mini Project</TitleText>
          <CaptionButton aria-label="Minimize"><Minimize /></CaptionButton>
          <CaptionButton aria-label="Restore"><Restore /></CaptionButton>
          <CaptionButton aria-label="Close"><Close /></CaptionButton>
        </TitleBar>
        <MenuBar>
          {menus.map((m) => <MenuItem key={m}>{m}</MenuItem>)}
        </MenuBar>
        <ToolBar>
          <Grip />
          <ToolButton aria-label="New"><NewIcon /></ToolButton>
          <ToolButton aria-label="Open"><OpenIcon /></ToolButton>
          <ToolButton aria-label="Save"><SaveIcon /></ToolButton>
          <Separator />
          <ToolButton aria-label="Print"><PrinterIcon /></ToolButton>
          <ToolButton aria-label="Print preview"><PreviewIcon /></ToolButton>
          <Separator />
          <ToolButton aria-label="Help"><HelpIcon /></ToolButton>
        </ToolBar>
        <MdiArea>
          <CourseForm />
          <ReportShadow />
          <Report />
        </MdiArea>
        <StatusStrip>Status</StatusStrip>
      </MainWindow>
      <TaskBar>
        <Weather>
          <SunIcon />
          <Lines>35°C<Muted>Sunny</Muted></Lines>
        </Weather>
        <Apps>
          {apps.map(([label, Glyph, running]) => (
            <AppButton key={label} aria-label={label}>
              <Glyph />
              {running && <RunMark />}
            </AppButton>
          ))}
          <AppButton $active aria-label="Mini Project">
            <FormsIcon size={22} dark />
            <RunMark $active />
          </AppButton>
        </Apps>
        <Tray>
          <ChevronIcon />
          <CloudIcon />
          <Language>ENG<br />IN</Language>
          <WifiIcon />
          <SpeakerIcon />
          <BatteryIcon />
          <Clock>18:10<br />09-03-2022</Clock>
          <Badge>1</Badge>
        </Tray>
      </TaskBar>
    </Desktop>
  );
}
